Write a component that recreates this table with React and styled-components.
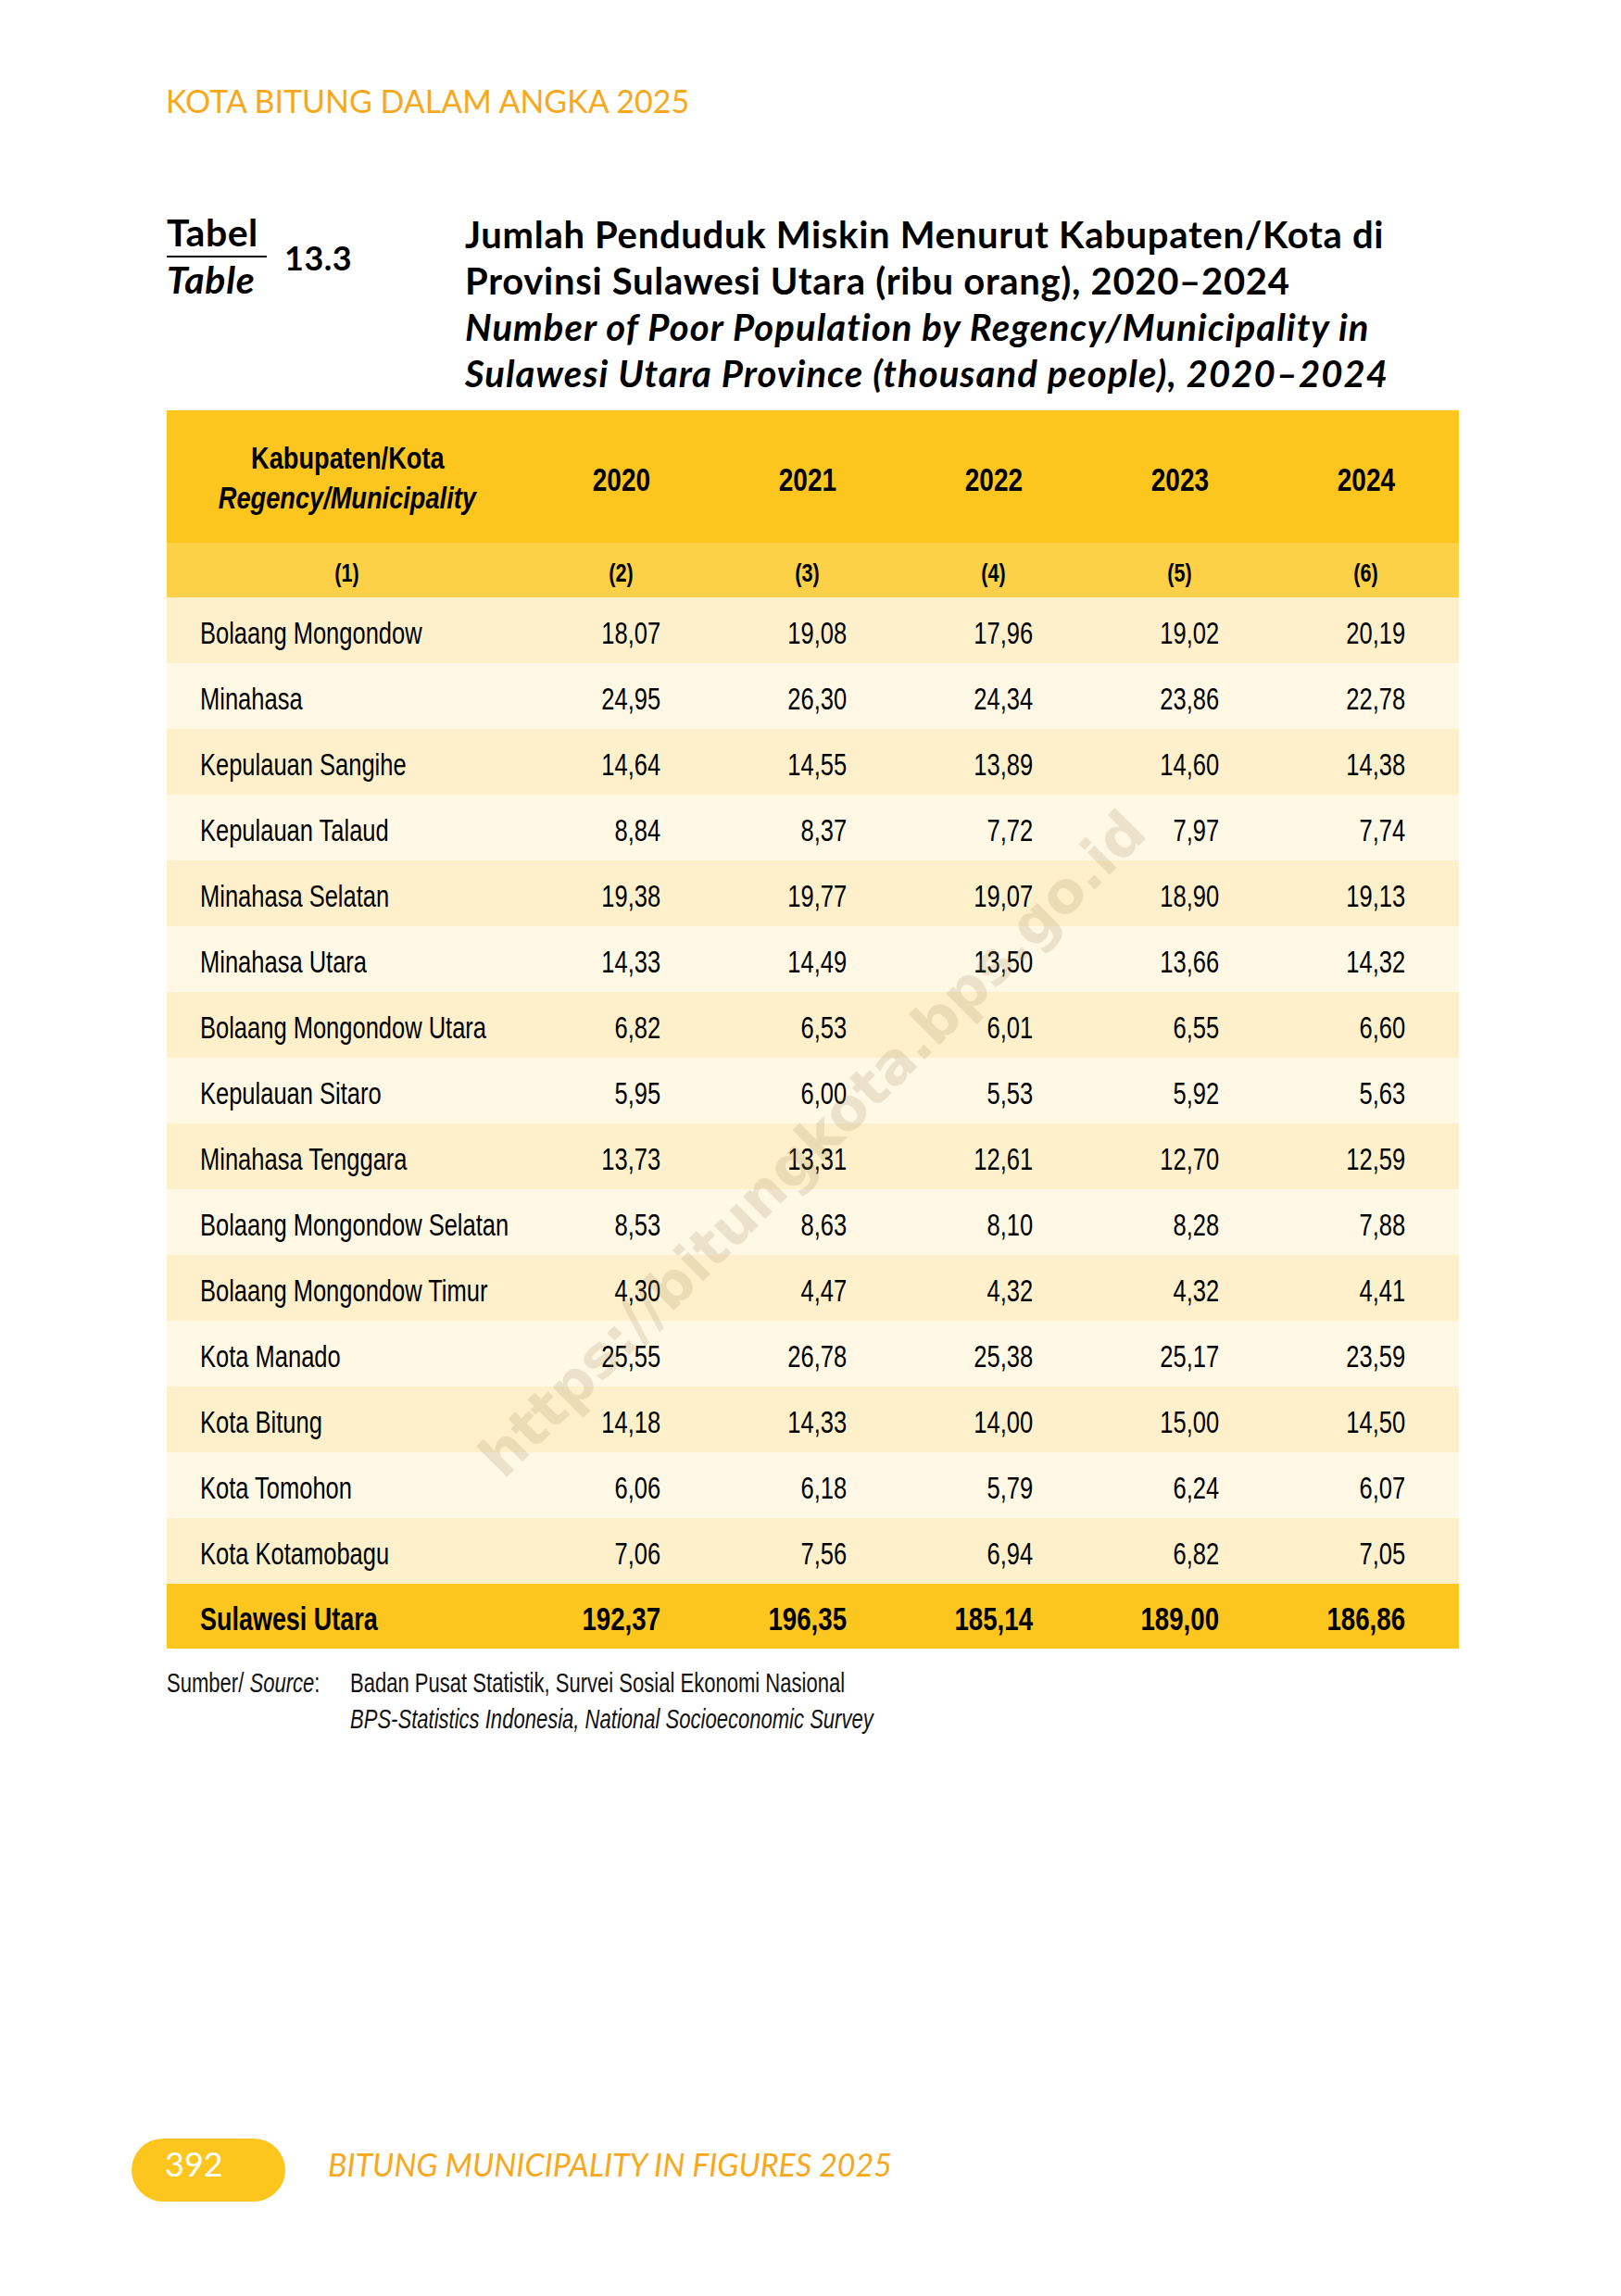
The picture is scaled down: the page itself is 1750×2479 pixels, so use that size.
import styled, { createGlobalStyle } from "styled-components"

const GlobalStyle = createGlobalStyle`
  body {
    margin: 0;
    background: #ffffff;
  }
`

const tableFont = `"Liberation Sans", Arial, sans-serif`

const Page = styled.div`
  position: relative;
  width: 1750px;
  min-height: 2479px;
  box-sizing: border-box;
  padding-top: 91px;
  padding-bottom: 102px;
  display: flex;
  flex-direction: column;
  overflow: hidden;
`

const Content = styled.div`
  padding-left: 180px;
  display: flex;
  flex-direction: column;
`

const RunningHead = styled.div`
  margin-left: -1px;
  font-family: Lato, sans-serif;
  font-size: 34px;
  line-height: 36px;
  height: 36px;
  color: #f7a81c;
`

const TitleBlock = styled.div`
  margin-top: 99px;
  display: grid;
  grid-template-columns: 108px 214px 1fr;
  align-items: start;
  font-family: Lato, sans-serif;
  font-weight: 700;
  color: #000;
`

const Label = styled.div`
  display: flex;
  flex-direction: column;
`

const LabelTop = styled.div`
  font-size: 41px;
  line-height: 50px;
  letter-spacing: 0.5px;
  border-bottom: 2px solid #000;
`

const LabelBottom = styled.div`
  font-size: 41px;
  line-height: 48px;
  letter-spacing: 0.8px;
  font-style: italic;
`

const TableNo = styled.div`
  margin-top: 34px;
  padding-left: 19px;
  font-size: 36px;
  line-height: 36px;
  letter-spacing: 0.5px;
`

const TitleText = styled.div`
  margin-top: 2px;
  display: flex;
  flex-direction: column;
`

const TitleLine = styled.div`
  font-size: 40px;
  line-height: 50px;
  white-space: nowrap;
  font-style: ${p => (p.$italic ? "italic" : "normal")};
  letter-spacing: ${p => (p.$italic ? "1.05px" : "0.7px")};
`

const Table = styled.div`
  margin-top: 15px;
  width: 1395px;
  display: flex;
  flex-direction: column;
  font-family: ${tableFont};
  color: #000;
`

const Row = styled.div`
  display: grid;
  grid-template-columns: 390px repeat(5, 201px);
  align-items: center;
  height: ${p => p.$h}px;
  background: ${p => p.$bg};
`

// condensed look: the page uses a condensed face, squeeze a regular one
const Narrow = styled.span`
  display: inline-block;
  white-space: nowrap;
  transform: scaleX(${p => p.$sx || 0.75});
  transform-origin: ${p => p.$origin || "left"} center;
`

const HeadCell = styled.div`
  display: flex;
  flex-direction: column;
  align-items: center;
  padding-top: ${p => p.$pt || 0}px;
  font-weight: 700;
  font-size: ${p => p.$size}px;
  line-height: ${p => p.$lh || "normal"};
`

const Italic = styled.span`
  font-style: italic;
`

const NameCell = styled.div`
  padding-left: 36px;
  padding-top: 6px;
  font-size: ${p => (p.$bold ? 35 : 34)}px;
  font-weight: ${p => (p.$bold ? 700 : 400)};
`

const NumCell = styled.div`
  padding-right: 58px;
  padding-top: 6px;
  text-align: right;
  font-size: ${p => (p.$bold ? 35 : 34)}px;
  font-weight: ${p => (p.$bold ? 700 : 400)};
`

const Source = styled.div`
  margin-top: 18px;
  display: grid;
  grid-template-columns: 198px 1fr;
  font-family: ${tableFont};
  font-size: 29px;
  line-height: 39px;
  color: #111;
`

const SourceLines = styled.div`
  display: flex;
  flex-direction: column;
  align-items: flex-start;
`

const Footer = styled.div`
  margin-top: auto;
  padding-left: 142px;
  display: flex;
  align-items: center;
  gap: 46px;
`

const PagePill = styled.div`
  width: 166px;
  height: 68px;
  box-sizing: border-box;
  border-radius: 34px;
  background: #fcc61f;
  padding-left: 36px;
  padding-bottom: 14px;
  display: flex;
  align-items: center;
  font-family: Lato, sans-serif;
  font-size: 36px;
  color: #ffffff;
`

const FooterTitle = styled.div`
  padding-bottom: 14px;
  font-family: Lato, sans-serif;
  font-style: italic;
  font-size: 34px;
  color: #f7a81c;
`

const Watermark = styled.div`
  position: absolute;
  left: 877px;
  top: 1235px;
  transform: translate(-50%, -50%) rotate(-45deg);
  font-family: "DejaVu Sans", sans-serif;
  font-weight: 700;
  font-size: 62px;
  white-space: nowrap;
  color: rgba(160, 140, 100, 0.2);
  pointer-events: none;
`

const years = ["2020", "2021", "2022", "2023", "2024"]

const rows = [
  ["Bolaang Mongondow", "18,07", "19,08", "17,96", "19,02", "20,19"],
  ["Minahasa", "24,95", "26,30", "24,34", "23,86", "22,78"],
  ["Kepulauan Sangihe", "14,64", "14,55", "13,89", "14,60", "14,38"],
  ["Kepulauan Talaud", "8,84", "8,37", "7,72", "7,97", "7,74"],
  ["Minahasa Selatan", "19,38", "19,77", "19,07", "18,90", "19,13"],
  ["Minahasa Utara", "14,33", "14,49", "13,50", "13,66", "14,32"],
  ["Bolaang Mongondow Utara", "6,82", "6,53", "6,01", "6,55", "6,60"],
  ["Kepulauan Sitaro", "5,95", "6,00", "5,53", "5,92", "5,63"],
  ["Minahasa Tenggara", "13,73", "13,31", "12,61", "12,70", "12,59"],
  ["Bolaang Mongondow Selatan", "8,53", "8,63", "8,10", "8,28", "7,88"],
  ["Bolaang Mongondow Timur", "4,30", "4,47", "4,32", "4,32", "4,41"],
  ["Kota Manado", "25,55", "26,78", "25,38", "25,17", "23,59"],
  ["Kota Bitung", "14,18", "14,33", "14,00", "15,00", "14,50"],
  ["Kota Tomohon", "6,06", "6,18", "5,79", "6,24", "6,07"],
  ["Kota Kotamobagu", "7,06", "7,56", "6,94", "6,82", "7,05"],
]

const total = ["Sulawesi Utara", "192,37", "196,35", "185,14", "189,00", "186,86"]

function App() {
  return (
    <Page>
      <GlobalStyle />
      <Content>
        <RunningHead>KOTA BITUNG DALAM ANGKA 2025</RunningHead>

        <TitleBlock>
          <Label>
            <LabelTop>Tabel</LabelTop>
            <LabelBottom>Table</LabelBottom>
          </Label>
          <TableNo>13.3</TableNo>
          <TitleText>
            <TitleLine>Jumlah Penduduk Miskin Menurut Kabupaten/Kota di</TitleLine>
            <TitleLine>Provinsi Sulawesi Utara (ribu orang), 2020–2024</TitleLine>
            <TitleLine $italic>Number of Poor Population by Regency/Municipality in</TitleLine>
            <TitleLine $italic>Sulawesi Utara Province (thousand people), 2020–2024</TitleLine>
          </TitleText>
        </TitleBlock>

        <Table>
          <Row $h={143} $bg="#fcc61f">
            <HeadCell $size={34} $lh="43px" $pt={3}>
              <Narrow $origin="center" $sx={0.8}>Kabupaten/Kota</Narrow>
              <Narrow $origin="center" $sx={0.8}><Italic>Regency/Municipality</Italic></Narrow>
            </HeadCell>
            {years.map(y => (
              <HeadCell key={y} $size={35} $pt={6}>
                <Narrow $origin="center" $sx={0.8}>{y}</Narrow>
              </HeadCell>
            ))}
          </Row>
          <Row $h={59} $bg="#fcd147">
            {[1, 2, 3, 4, 5, 6].map(n => (
              <HeadCell key={n} $size={27} $pt={8}>
                <Narrow $origin="center" $sx={0.8}>({n})</Narrow>
              </HeadCell>
            ))}
          </Row>
          {rows.map((r, i) => (
            <Row key={r[0]} $h={71} $bg={i % 2 === 0 ? "#fef0cb" : "#fff8e5"}>
              <NameCell><Narrow>{r[0]}</Narrow></NameCell>
              {r.slice(1).map((v, j) => (
                <NumCell key={j}><Narrow $origin="right">{v}</Narrow></NumCell>
              ))}
            </Row>
          ))}
          <Row $h={70} $bg="#fcc61f">
            <NameCell $bold><Narrow $sx={0.77}>{total[0]}</Narrow></NameCell>
            {total.slice(1).map((v, j) => (
              <NumCell key={j} $bold><Narrow $origin="right" $sx={0.79}>{v}</Narrow></NumCell>
            ))}
          </Row>
        </Table>

        <Source>
          <div><Narrow $sx={0.76}>Sumber/ <Italic>Source</Italic>:</Narrow></div>
          <SourceLines>
            <Narrow $sx={0.76}>Badan Pusat Statistik, Survei Sosial Ekonomi Nasional</Narrow>
            <Narrow $sx={0.76}><Italic>BPS-Statistics Indonesia, National Socioeconomic Survey</Italic></Narrow>
          </SourceLines>
        </Source>
      </Content>

      <Footer>
        <PagePill>392</PagePill>
        <FooterTitle>BITUNG MUNICIPALITY IN FIGURES 2025</FooterTitle>
      </Footer>

      <Watermark>https://bitungkota.bps.go.id</Watermark>
    </Page>
  )
}

export default App
